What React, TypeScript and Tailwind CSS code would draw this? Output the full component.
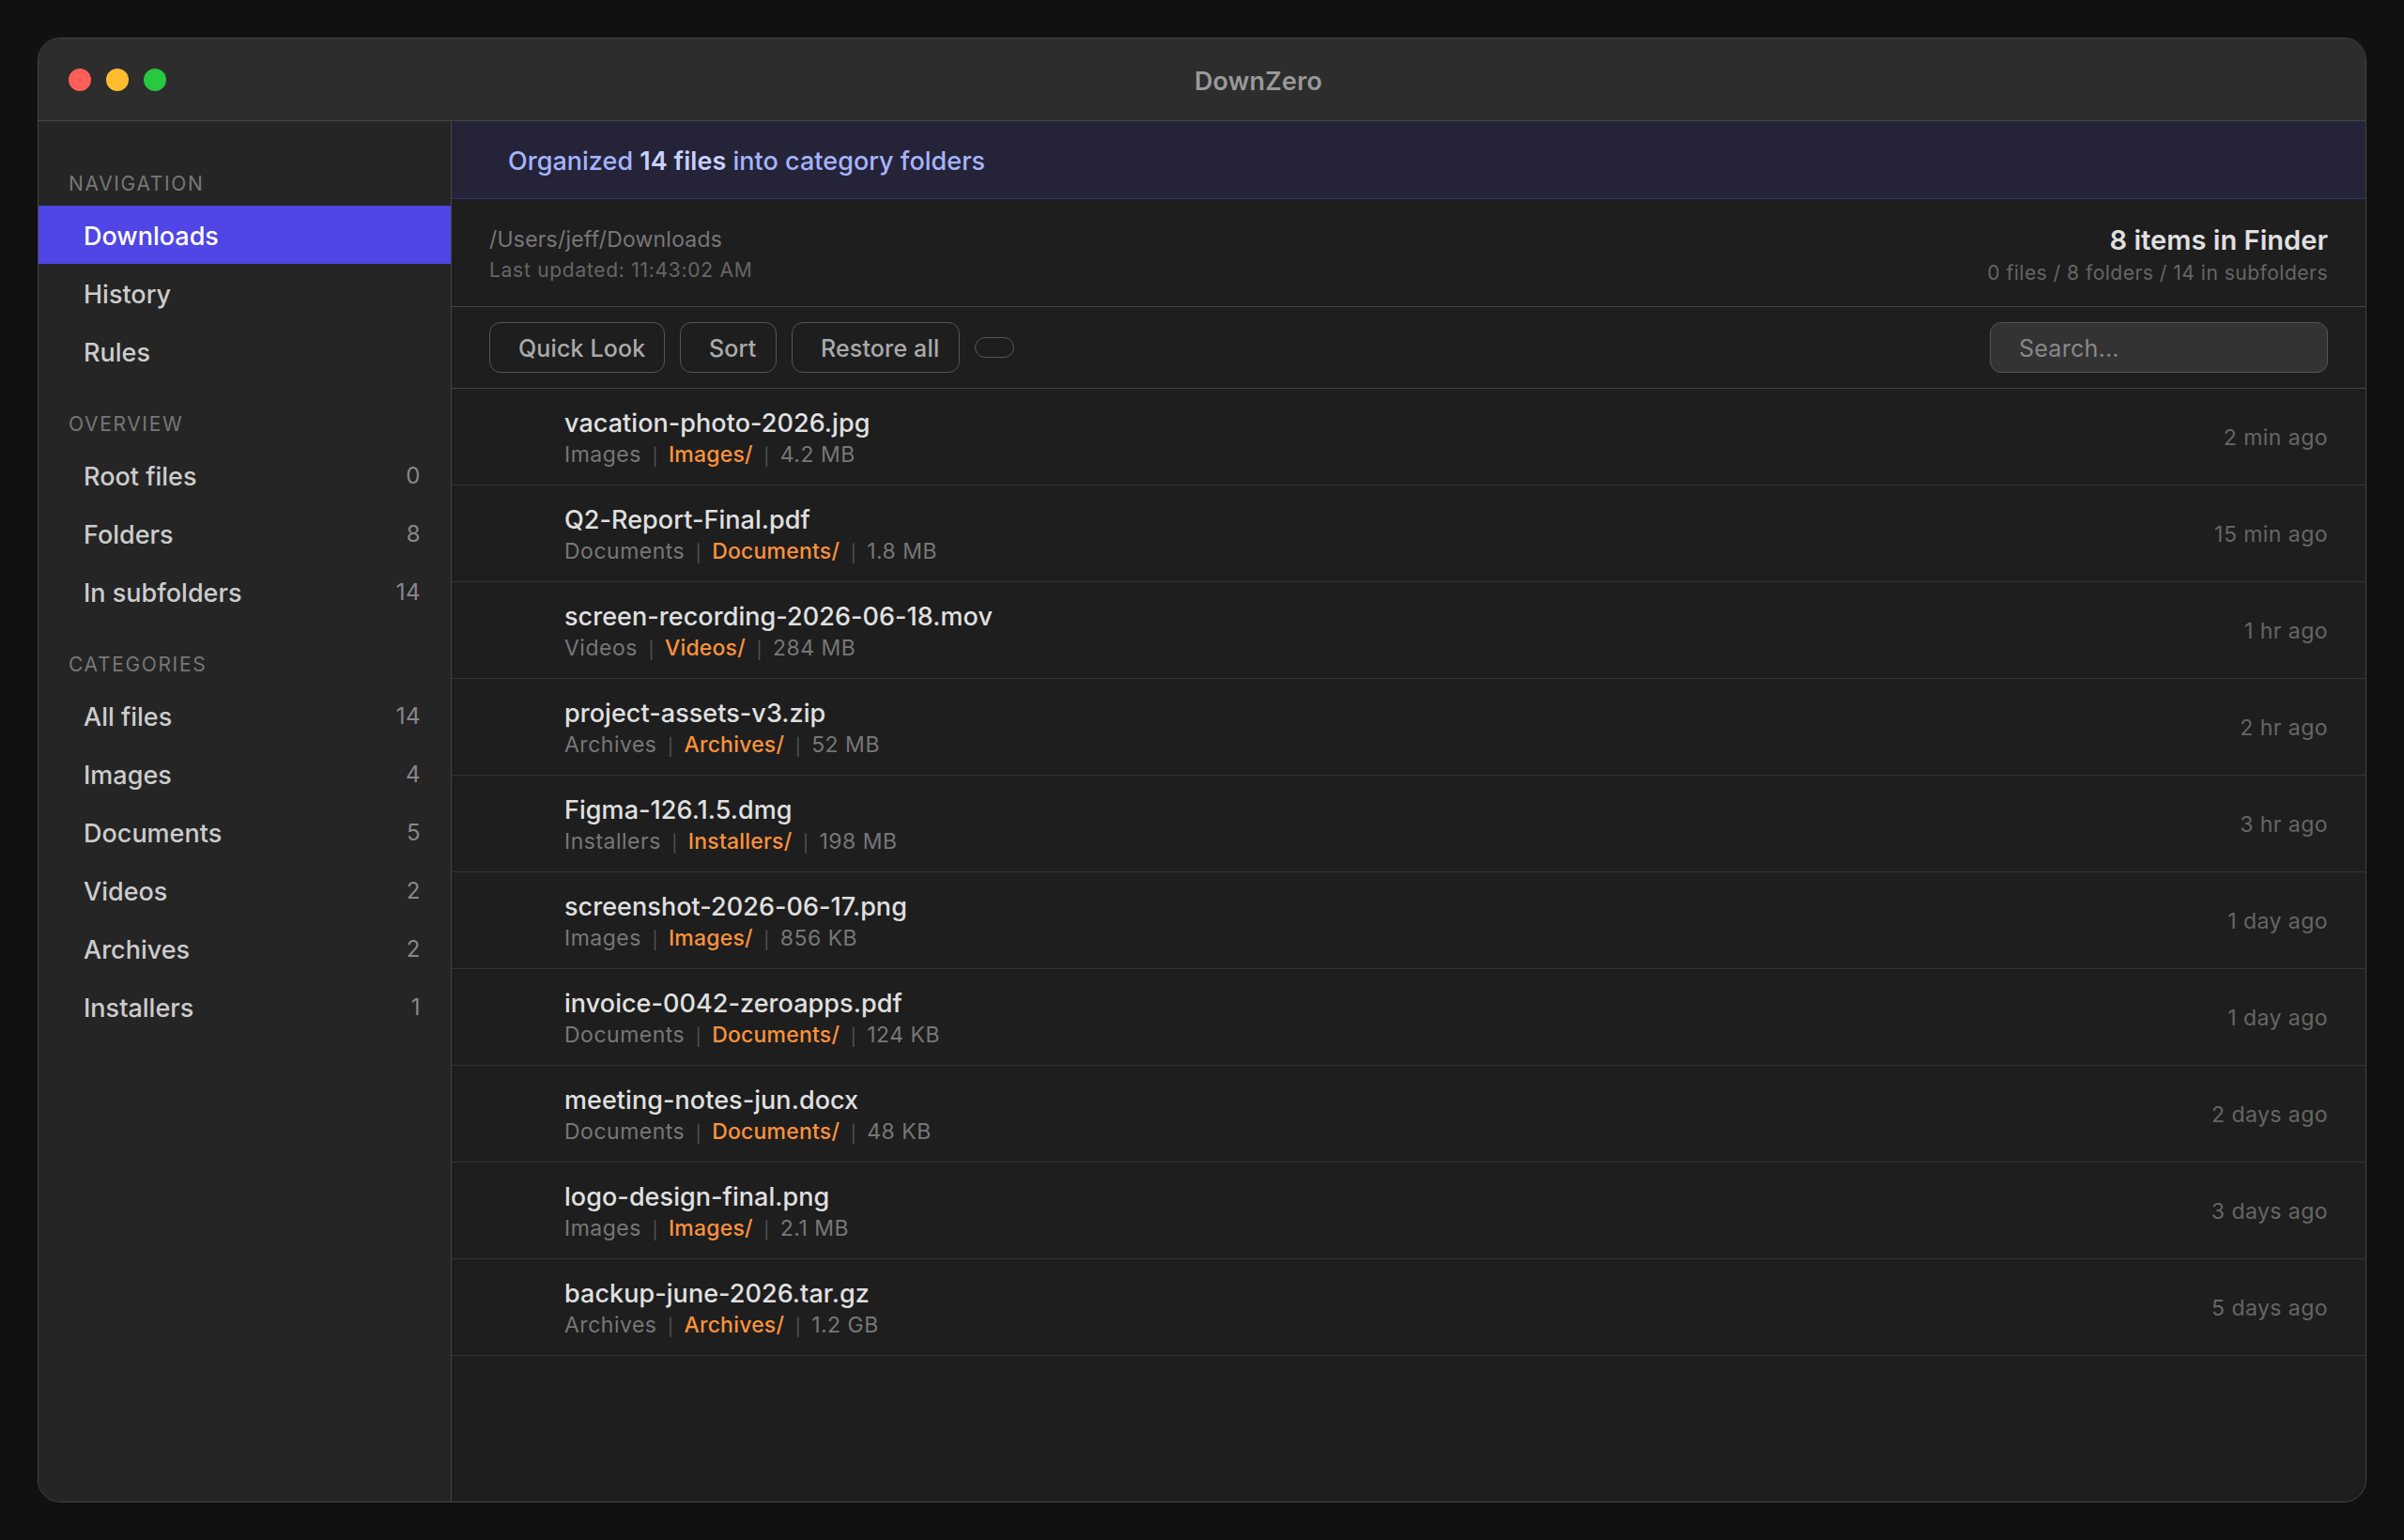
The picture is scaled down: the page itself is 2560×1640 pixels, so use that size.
import React, { useState } from 'react';

interface NavItem {
  label: string;
  count?: number;
}

interface FileEntry {
  name: string;
  category: string;
  size: string;
  time: string;
}

const sections: { title: string; items: NavItem[] }[] = [
  { title: 'NAVIGATION', items: [{ label: 'Downloads' }, { label: 'History' }, { label: 'Rules' }] },
  {
    title: 'OVERVIEW',
    items: [
      { label: 'Root files', count: 0 },
      { label: 'Folders', count: 8 },
      { label: 'In subfolders', count: 14 },
    ],
  },
  {
    title: 'CATEGORIES',
    items: [
      { label: 'All files', count: 14 },
      { label: 'Images', count: 4 },
      { label: 'Documents', count: 5 },
      { label: 'Videos', count: 2 },
      { label: 'Archives', count: 2 },
      { label: 'Installers', count: 1 },
    ],
  },
];

const files: FileEntry[] = [
  { name: 'vacation-photo-2026.jpg', category: 'Images', size: '4.2 MB', time: '2 min ago' },
  { name: 'Q2-Report-Final.pdf', category: 'Documents', size: '1.8 MB', time: '15 min ago' },
  { name: 'screen-recording-2026-06-18.mov', category: 'Videos', size: '284 MB', time: '1 hr ago' },
  { name: 'project-assets-v3.zip', category: 'Archives', size: '52 MB', time: '2 hr ago' },
  { name: 'Figma-126.1.5.dmg', category: 'Installers', size: '198 MB', time: '3 hr ago' },
  { name: 'screenshot-2026-06-17.png', category: 'Images', size: '856 KB', time: '1 day ago' },
  { name: 'invoice-0042-zeroapps.pdf', category: 'Documents', size: '124 KB', time: '1 day ago' },
  { name: 'meeting-notes-jun.docx', category: 'Documents', size: '48 KB', time: '2 days ago' },
  { name: 'logo-design-final.png', category: 'Images', size: '2.1 MB', time: '3 days ago' },
  { name: 'backup-june-2026.tar.gz', category: 'Archives', size: '1.2 GB', time: '5 days ago' },
];

const TitleBar = () => (
  <div className="flex h-[88px] shrink-0 items-center gap-4 border-b border-[#444] bg-[#2d2d2d] px-8 pt-px">
    <span className="size-6 rounded-full bg-[#ff5f57]" />
    <span className="size-6 rounded-full bg-[#febc2e]" />
    <span className="size-6 rounded-full bg-[#28c840]" />
    <div className="flex-1 pt-[3px] text-center text-[27px] leading-[33px] font-semibold tracking-[0.15px] text-[#999]">DownZero</div>
  </div>
);

const Sidebar = ({ active, onSelect }: { active: string; onSelect: (label: string) => void }) => (
  <div className="w-[440px] shrink-0 border-r border-[#444] bg-[#252525] pt-5">
    {sections.map(section => (
      <div key={section.title}>
        <div className="h-[70px] px-8 pt-[34px] text-[21px] leading-[25px] tracking-[1.65px] text-[#777]">{section.title}</div>
        {section.items.map(item => (
          <button
            key={item.label}
            onClick={() => onSelect(item.label)}
            className={`flex h-[62px] w-full items-center justify-between pr-8 pl-12 text-left ${active === item.label ? 'bg-[#4f46e5] text-white' : 'text-[#ccc]'}`}
          >
            <span className="pt-[3px] text-[27px] leading-[33px] font-[450]">{item.label}</span>
            {item.count !== undefined && (
              <span className="pt-px text-[24px] leading-[29px] tracking-[0.5px] text-[#888]">{item.count}</span>
            )}
          </button>
        ))}
      </div>
    ))}
  </div>
);

const ToolbarButton = ({ label, className }: { label: string; className: string }) => (
  <button className={`flex h-[54px] items-center rounded-xl border border-[#555] pl-[30px] text-[25px] font-medium tracking-[0.15px] whitespace-nowrap text-[#aaa] ${className}`}>
    <span className="pt-[2px] leading-[30px]">{label}</span>
  </button>
);

const Divider = () => <span className="w-[7px] pt-[3px] text-center text-[18px] leading-7 tracking-normal text-[#555]">|</span>;

const FileRow = ({ file }: { file: FileEntry }) => (
  <div className="flex h-[103px] items-center justify-between border-b border-[#333] pr-10 pl-[120px]">
    <div className="flex flex-col gap-[3px] pt-[2px]">
      <div className="text-[27px] leading-[33px] font-medium tracking-[0.05px] text-[#e0e0e0]">{file.name}</div>
      <div className="flex h-7 gap-[11px] text-[23px] leading-7 tracking-[0.5px] text-[#777]">
        <span>{file.category}</span>
        <Divider />
        <span className="font-medium tracking-[0.2px] text-[#fb923c]">{file.category}/</span>
        <Divider />
        <span>{file.size}</span>
      </div>
    </div>
    <div className="pt-[2px] text-[23px] leading-7 tracking-[0.45px] text-[#666]">{file.time}</div>
  </div>
);

export default function App() {
  const [active, setActive] = useState('Downloads');
  const [query, setQuery] = useState('');

  const visible = files.filter(f => f.name.toLowerCase().includes(query.toLowerCase()));

  return (
    <div className="h-screen w-full bg-[#111] p-10 font-['Inter',sans-serif]">
      <div className="flex h-full flex-col overflow-hidden rounded-3xl border border-[#444] bg-[#1e1e1e]">
        <TitleBar />
        <div className="flex min-h-0 flex-1">
          <Sidebar active={active} onSelect={setActive} />

          <div className="min-w-0 flex-1">
            <div className="flex h-[83px] items-center border-b border-[#352f68] bg-[#252338] pl-[60px]">
              <p className="pt-[3px] text-[27px] leading-[33px] font-[450] tracking-[0.02px] text-[#a5b4fc]">
                Organized <strong className="font-semibold text-[#c7d2fe]">14 files</strong> into category folders
              </p>
            </div>

            <div className="flex h-[115px] items-start justify-between border-b border-[#444] px-10">
              <div className="flex flex-col gap-1.5 pt-[29px]">
                <div className="text-[23px] leading-7 tracking-[0.2px] text-[#777]">/Users/jeff/Downloads</div>
                <div className="text-[21px] leading-[25px] tracking-[0.72px] text-[#666]">Last updated: 11:43:02 AM</div>
              </div>
              <div className="flex flex-col gap-[5px] pt-[26px] text-right">
                <div className="text-[29px] leading-[35px] font-semibold tracking-[0.05px] text-[#e0e0e0]">8 items in Finder</div>
                <div className="text-[21px] leading-[25px] tracking-[0.5px] text-[#666]">0 files / 8 folders / 14 in subfolders</div>
              </div>
            </div>

            <div className="flex h-[87px] items-center gap-4 border-b border-[#444] px-10">
              <ToolbarButton label="Quick Look" className="w-[187px]" />
              <ToolbarButton label="Sort" className="w-[103px]" />
              <ToolbarButton label="Restore all" className="w-[179px]" />
              <button aria-label="More" className="h-[22px] w-[42px] rounded-xl border border-[#555]" />
              <input
                value={query}
                onChange={e => setQuery(e.target.value)}
                placeholder="Search..."
                className="ml-auto h-[54px] w-[360px] rounded-xl border border-[#555] bg-[#333] pt-[2px] pl-[30px] text-[25px] tracking-[0.25px] text-[#e0e0e0] placeholder:text-[#888]"
              />
            </div>

            {visible.map(file => (
              <FileRow key={file.name} file={file} />
            ))}
          </div>
        </div>
      </div>
    </div>
  );
}
